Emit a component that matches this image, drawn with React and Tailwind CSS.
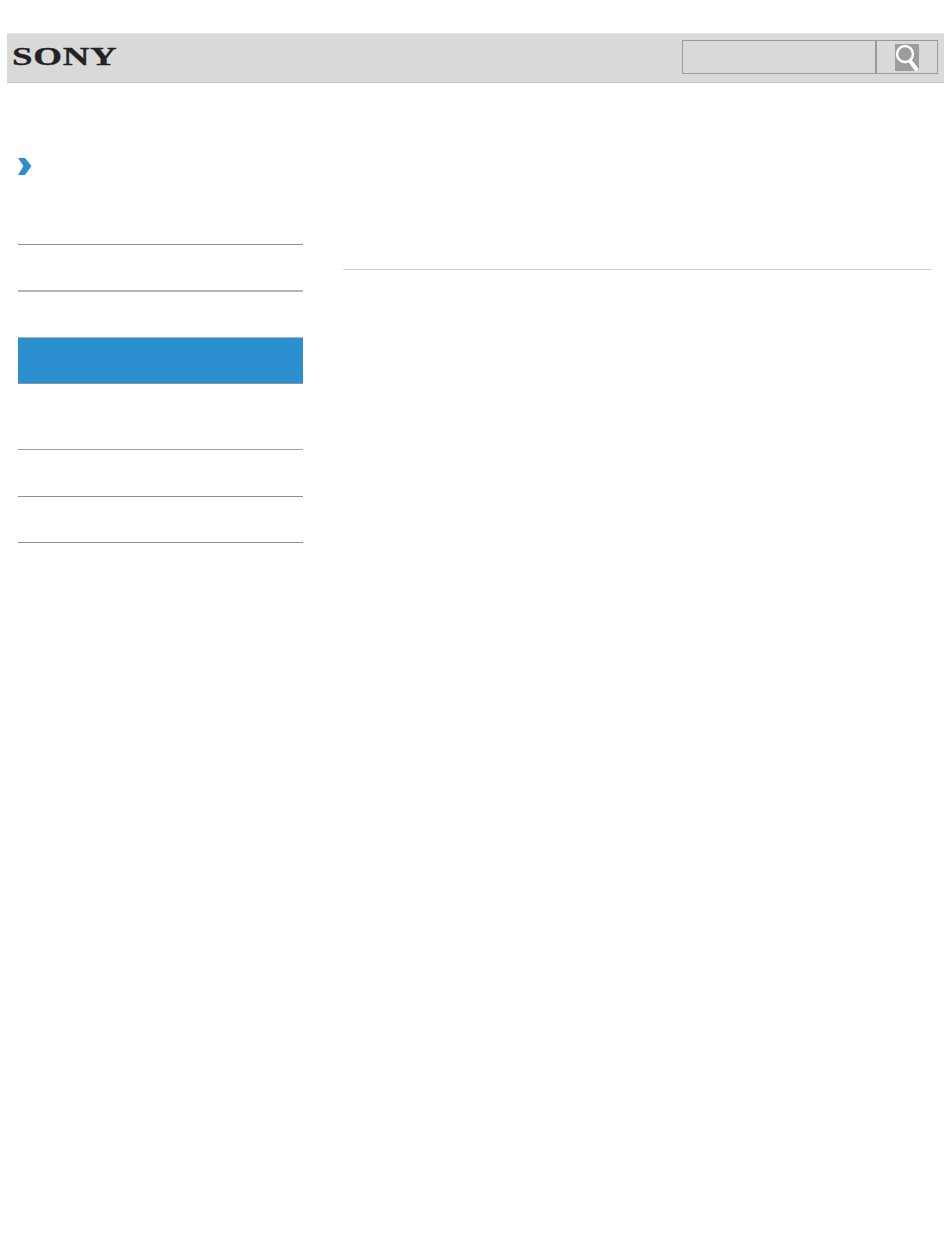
function SearchIcon() {
  return (
    <svg width="24" height="27" viewBox="0 0 24 27" className="block">
      <rect width="24" height="27" fill="#9c9c9c" />
      <circle cx="10" cy="10" r="8" fill="none" stroke="#fff" strokeWidth="2.5" />
      <path d="M15.5 17.5 L21.5 25.5" stroke="#fff" strokeWidth="4" strokeLinecap="round" />
    </svg>
  );
}

function Chevron() {
  return (
    <svg width="14" height="17" viewBox="0 0 14 17" className="block">
      <path d="M0 0 H7 L13.5 8 L7 17 H0 L5.5 8 Z" fill="#2a8ecf" />
    </svg>
  );
}

export default function App() {
  return (
    <div className="min-h-[1237px] bg-white pt-[33px] font-['Liberation_Sans',sans-serif]">
      <header className="ml-[7px] flex h-[50px] w-[937px] items-start justify-between border-t border-b border-t-[#e4e4e4] border-b-[#c9c9c9] bg-[#d9d9d9]">
        <div className="mt-[10px] ml-[5px] origin-left scale-x-[1.42] font-['Liberation_Serif',serif] text-[26px] leading-[26px] font-bold tracking-[0.5px] text-[#222] [-webkit-text-stroke:0.3px_#222]">
          SONY
        </div>
        <div className="mt-[6px] mr-[6px] flex h-[34px] w-[256px] border border-[#9a9a9a]">
          <div className="flex-1 border-r-2 border-[#9a9a9a]" />
          <div className="flex w-[60px] items-center justify-center pr-[1px]">
            <SearchIcon />
          </div>
        </div>
      </header>

      <div className="flex pl-[18px]">
        <aside className="w-[285px]">
          <div className="mt-[75px] mb-[69px]">
            <Chevron />
          </div>
          <div className="h-[46px] border-t border-[#8f8f8f]" />
          <div className="h-[47px] border-t-2 border-[#b5b5b5]" />
          <div className="h-[47px] border-y border-t-[#a9b4bb] border-b-[#8b98a3] bg-[#2a8ecf]" />
          <div className="h-[65px]" />
          <div className="h-[47px] border-t border-[#a0a0a0]" />
          <div className="h-[46px] border-t border-[#8f8f8f]" />
          <div className="border-t border-[#8f8f8f]" />
        </aside>
        <main className="ml-[40px] w-[589px]">
          <div className="mt-[186px] border-t border-[#cfcfcf]" />
        </main>
      </div>
    </div>
  );
}
